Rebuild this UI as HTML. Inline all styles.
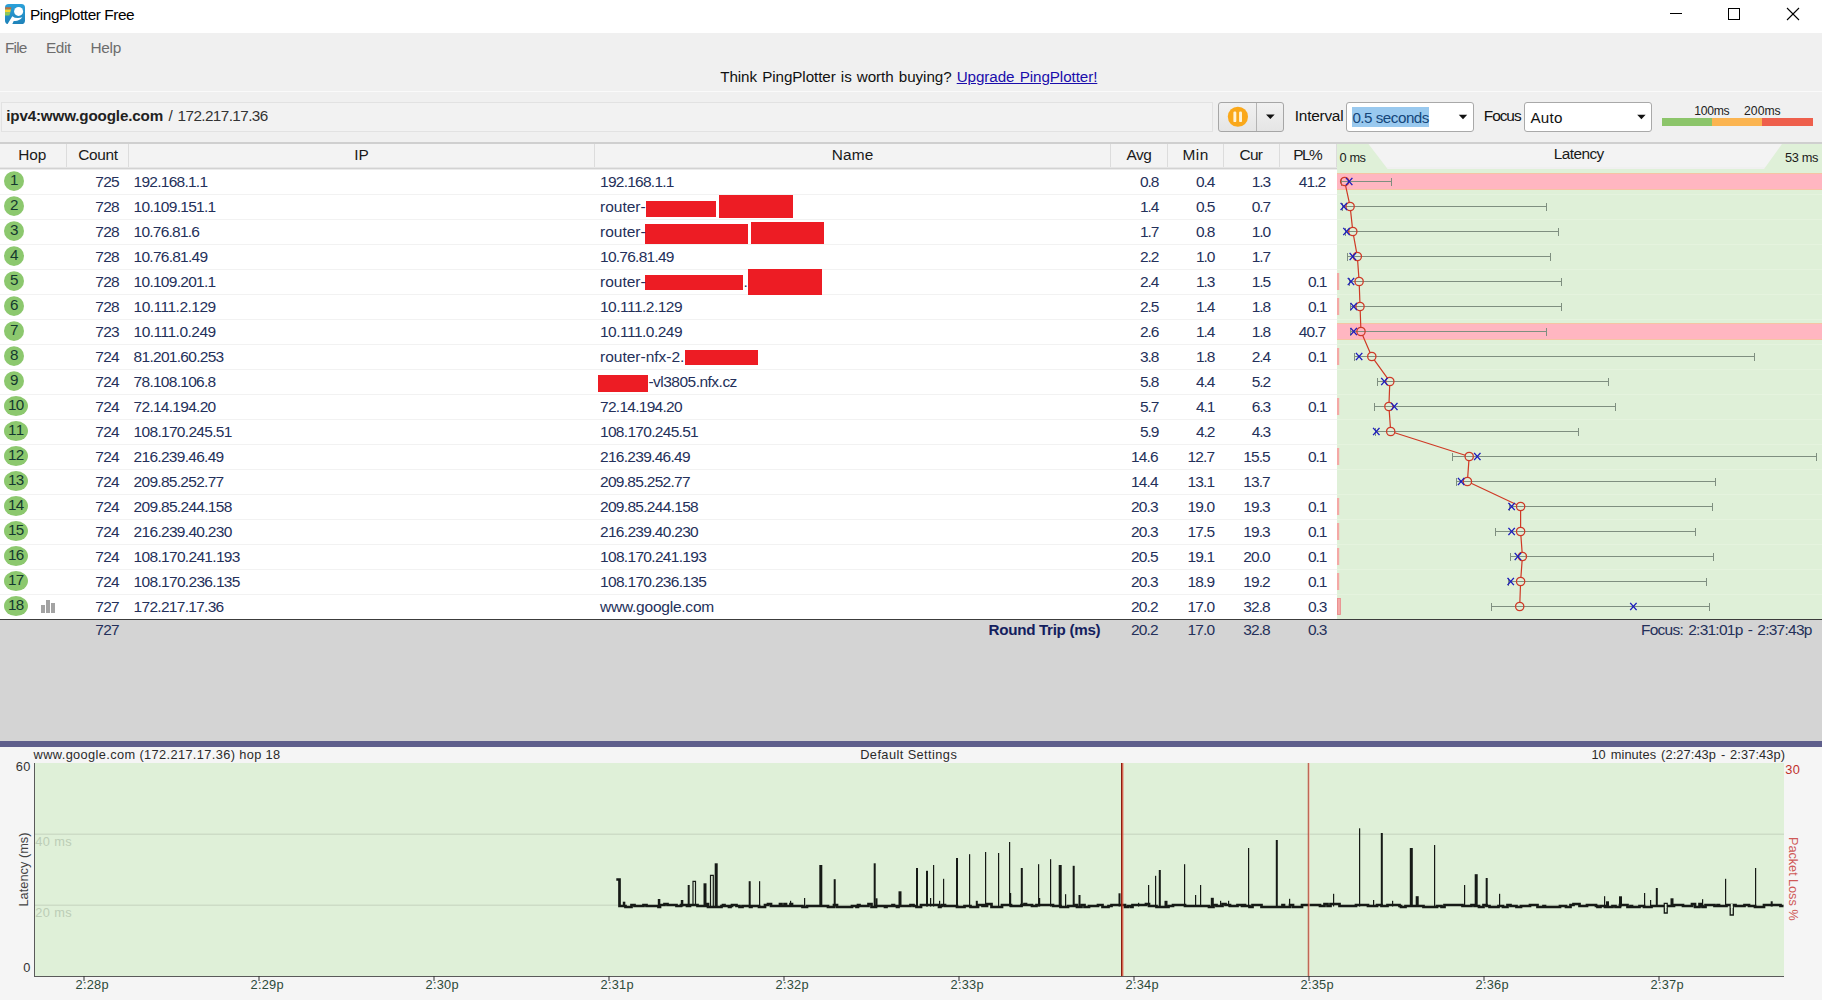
<!DOCTYPE html>
<html><head><meta charset="utf-8"><title>PingPlotter Free</title>
<style>
html,body{margin:0;padding:0}
body{width:1822px;height:1000px;position:relative;overflow:hidden;background:#f0f0f0;font-family:'Liberation Sans',sans-serif}
.t{position:absolute;white-space:pre}
.b{position:absolute}
svg{position:absolute;left:0;top:0}
</style></head><body>
<div class="b" style="left:0px;top:0px;width:1822px;height:33px;background:#fff;"></div>
<svg width="30" height="33" viewBox="0 0 30 33">
<defs><linearGradient id="ig" x1="0" y1="0" x2="0" y2="1"><stop offset="0" stop-color="#2ba1da"/><stop offset="1" stop-color="#1f82b9"/></linearGradient></defs>
<rect x="5" y="4" width="20" height="20" rx="3.600" fill="url(#ig)"/>
<path d="M5.300 7.300h6.100l-.5 2.200h-5.800z" fill="#c2703c"/>
<path d="M5 9.500h5.900l-.7 2.900h-5.200z" fill="#f6d730"/>
<path d="M5 12.400h5.200l-.8 3.200h-4.400z" fill="#8fca54"/>
<circle cx="18.600" cy="11.400" r="4.500" fill="#fff"/>
<path d="M7.300 24.400L12.300 16.200Q16 19.200 22.400 17.300Q18.600 21.800 13.700 21L12.100 24.400z" fill="#fff"/>
</svg>
<svg width="1822" height="33" viewBox="0 0 1822 33" shape-rendering="crispEdges">
<rect x="1670" y="13" width="12" height="1" fill="#000"/>
<rect x="1728.5" y="8.500" width="11" height="11" fill="none" stroke="#000" stroke-width="1"/>
<g shape-rendering="auto" stroke="#000" stroke-width="1.1"><line x1="1787" y1="8" x2="1799" y2="20"/><line x1="1799" y1="8" x2="1787" y2="20"/></g>
</svg>
<div class="b" style="left:0px;top:91px;width:1822px;height:1px;background:#fafafa;"></div>
<div class="b" style="left:1px;top:102px;width:1212px;height:30px;background:#f2f2f2;border:1px solid #e2e2e2;box-sizing:border-box;"></div>
<div class="b" style="left:1218px;top:102px;width:66px;height:30px;box-sizing:border-box;border:1px solid #a6a6a6;border-radius:3px;background:linear-gradient(#f1f1f1,#e5e5e5)"></div>
<div class="b" style="left:1256px;top:103px;width:1px;height:28px;background:#b4b4b4;"></div>
<svg width="1822" height="145" viewBox="0 0 1822 145">
<circle cx="1237.900" cy="116.750" r="10.100" fill="#faa81a"/>
<rect x="1233.400" y="111.600" width="2.900" height="10.500" rx="1.2" fill="#fff3d6"/>
<rect x="1239.100" y="111.600" width="2.900" height="10.500" rx="1.2" fill="#fff3d6"/>
<path d="M1266 114.500h8.700l-4.350 4.600z" fill="#111"/>
</svg>
<div class="b" style="left:1346px;top:102px;width:128px;height:30px;box-sizing:border-box;border:1px solid #a9a9a9;border-radius:3px;background:#fff"></div>
<div class="b" style="left:1352px;top:107px;width:77px;height:20px;background:#99c9ef;"></div>
<div class="b" style="left:1524px;top:102px;width:128px;height:30px;box-sizing:border-box;border:1px solid #a9a9a9;border-radius:3px;background:#fff"></div>
<svg width="1822" height="145" viewBox="0 0 1822 145"><path d="M1458.8 114.800h8.400l-4.200 4.400z" fill="#111"/><path d="M1637.2 114.800h8.400l-4.200 4.400z" fill="#111"/></svg>
<div class="b" style="left:1662px;top:118px;width:50px;height:8px;background:#8cc56a;"></div>
<div class="b" style="left:1712px;top:118px;width:50px;height:8px;background:#fbb450;"></div>
<div class="b" style="left:1762px;top:118px;width:50.5px;height:8px;background:#ee5f4c;"></div>
<div class="b" style="left:0px;top:142px;width:1822px;height:2px;background:#cfcfcf;"></div>
<div class="b" style="left:0px;top:144px;width:1822px;height:23px;background:#f3f3f3;"></div>
<div class="b" style="left:0px;top:167px;width:1337px;height:1px;background:#e5e5e5;"></div>
<div class="b" style="left:0px;top:168px;width:1337px;height:1px;background:#d2d2d2;"></div>
<div class="b" style="left:66px;top:144px;width:1px;height:23px;background:#dcdcdc;"></div>
<div class="b" style="left:128px;top:144px;width:1px;height:23px;background:#dcdcdc;"></div>
<div class="b" style="left:594px;top:144px;width:1px;height:23px;background:#dcdcdc;"></div>
<div class="b" style="left:1110px;top:144px;width:1px;height:23px;background:#dcdcdc;"></div>
<div class="b" style="left:1167px;top:144px;width:1px;height:23px;background:#dcdcdc;"></div>
<div class="b" style="left:1223px;top:144px;width:1px;height:23px;background:#dcdcdc;"></div>
<div class="b" style="left:1279px;top:144px;width:1px;height:23px;background:#dcdcdc;"></div>
<div class="b" style="left:1336px;top:144px;width:1px;height:23px;background:#dcdcdc;"></div>
<div class="b" style="left:0px;top:169px;width:1337px;height:450px;background:#fff;"></div>
<div class="b" style="left:0px;top:169px;width:1337px;height:1px;background:#ebebeb;"></div>
<div class="b" style="left:0px;top:194px;width:1337px;height:1px;background:#f2f2f2;"></div>
<div class="b" style="left:0px;top:219px;width:1337px;height:1px;background:#f2f2f2;"></div>
<div class="b" style="left:0px;top:244px;width:1337px;height:1px;background:#f2f2f2;"></div>
<div class="b" style="left:0px;top:269px;width:1337px;height:1px;background:#f2f2f2;"></div>
<div class="b" style="left:0px;top:294px;width:1337px;height:1px;background:#f2f2f2;"></div>
<div class="b" style="left:0px;top:319px;width:1337px;height:1px;background:#f2f2f2;"></div>
<div class="b" style="left:0px;top:344px;width:1337px;height:1px;background:#f2f2f2;"></div>
<div class="b" style="left:0px;top:369px;width:1337px;height:1px;background:#f2f2f2;"></div>
<div class="b" style="left:0px;top:394px;width:1337px;height:1px;background:#f2f2f2;"></div>
<div class="b" style="left:0px;top:419px;width:1337px;height:1px;background:#f2f2f2;"></div>
<div class="b" style="left:0px;top:444px;width:1337px;height:1px;background:#f2f2f2;"></div>
<div class="b" style="left:0px;top:469px;width:1337px;height:1px;background:#f2f2f2;"></div>
<div class="b" style="left:0px;top:494px;width:1337px;height:1px;background:#f2f2f2;"></div>
<div class="b" style="left:0px;top:519px;width:1337px;height:1px;background:#f2f2f2;"></div>
<div class="b" style="left:0px;top:544px;width:1337px;height:1px;background:#f2f2f2;"></div>
<div class="b" style="left:0px;top:569px;width:1337px;height:1px;background:#f2f2f2;"></div>
<div class="b" style="left:0px;top:594px;width:1337px;height:1px;background:#f2f2f2;"></div>
<svg width="40" height="640" viewBox="0 0 40 640" fill="#8cc86e"><ellipse cx="14" cy="181.1" rx="10" ry="9.9"/><ellipse cx="14" cy="206.1" rx="10" ry="9.9"/><ellipse cx="14" cy="231.1" rx="10" ry="9.9"/><ellipse cx="14" cy="256.1" rx="10" ry="9.9"/><ellipse cx="14" cy="281.1" rx="10" ry="9.9"/><ellipse cx="14" cy="306.1" rx="10" ry="9.9"/><ellipse cx="14" cy="331.1" rx="10" ry="9.9"/><ellipse cx="14" cy="356.1" rx="10" ry="9.9"/><ellipse cx="14" cy="381.1" rx="10" ry="9.9"/><ellipse cx="16" cy="406.1" rx="12" ry="10"/><ellipse cx="16" cy="431.1" rx="12" ry="10"/><ellipse cx="16" cy="456.1" rx="12" ry="10"/><ellipse cx="16" cy="481.1" rx="12" ry="10"/><ellipse cx="16" cy="506.1" rx="12" ry="10"/><ellipse cx="16" cy="531.1" rx="12" ry="10"/><ellipse cx="16" cy="556.1" rx="12" ry="10"/><ellipse cx="16" cy="581.1" rx="12" ry="10"/><ellipse cx="16" cy="606.1" rx="12" ry="10"/></svg>
<div class="b" style="left:645.8px;top:201.1px;width:70.0px;height:15.6px;background:#ed1c24;"></div>
<div class="b" style="left:719.1px;top:195.1px;width:73.7px;height:22.5px;background:#ed1c24;"></div>
<div class="b" style="left:645.0px;top:223.5px;width:102.8px;height:20.2px;background:#ed1c24;"></div>
<div class="b" style="left:751.2px;top:222.2px;width:72.8px;height:21.5px;background:#ed1c24;"></div>
<div class="b" style="left:645.0px;top:275.0px;width:98.0px;height:14.7px;background:#ed1c24;"></div>
<div class="b" style="left:748.0px;top:269.2px;width:74.0px;height:25.4px;background:#ed1c24;"></div>
<div class="b" style="left:685.0px;top:350.3px;width:73.0px;height:14.3px;background:#ed1c24;"></div>
<div class="b" style="left:598.0px;top:375.3px;width:50.0px;height:16.3px;background:#ed1c24;"></div>
<div class="b" style="left:41px;top:605.4px;width:3.6px;height:7.2px;background:#a3a3a3;"></div>
<div class="b" style="left:46.3px;top:600px;width:3.8px;height:12.6px;background:#a3a3a3;"></div>
<div class="b" style="left:51.4px;top:603px;width:3.6px;height:9.6px;background:#a3a3a3;"></div>
<div class="b" style="left:0px;top:619px;width:1822px;height:122px;background:#d4d4d4;"></div>
<div class="b" style="left:0px;top:619px;width:1822px;height:1px;background:#3c3c3c;"></div>
<svg width="1822" height="640" viewBox="0 0 1822 640"><rect x="1337" y="169" width="485" height="450" fill="#dff0d8"/><polygon points="1337,144 1368.500,144 1387.600,169 1337,169" fill="#dff0d8"/><polygon points="1782,144 1822,144 1822,169 1764,169" fill="#dff0d8"/><rect x="1337" y="194" width="485" height="1" fill="#e5f3de"/><rect x="1337" y="219" width="485" height="1" fill="#e5f3de"/><rect x="1337" y="244" width="485" height="1" fill="#e5f3de"/><rect x="1337" y="269" width="485" height="1" fill="#e5f3de"/><rect x="1337" y="294" width="485" height="1" fill="#e5f3de"/><rect x="1337" y="319" width="485" height="1" fill="#e5f3de"/><rect x="1337" y="344" width="485" height="1" fill="#e5f3de"/><rect x="1337" y="369" width="485" height="1" fill="#e5f3de"/><rect x="1337" y="394" width="485" height="1" fill="#e5f3de"/><rect x="1337" y="419" width="485" height="1" fill="#e5f3de"/><rect x="1337" y="444" width="485" height="1" fill="#e5f3de"/><rect x="1337" y="469" width="485" height="1" fill="#e5f3de"/><rect x="1337" y="494" width="485" height="1" fill="#e5f3de"/><rect x="1337" y="519" width="485" height="1" fill="#e5f3de"/><rect x="1337" y="544" width="485" height="1" fill="#e5f3de"/><rect x="1337" y="569" width="485" height="1" fill="#e5f3de"/><rect x="1337" y="594" width="485" height="1" fill="#e5f3de"/><rect x="1337" y="173.0" width="485" height="17" fill="#f6c3a4"/><rect x="1337" y="174.0" width="485" height="15" fill="#ffb6c1"/><rect x="1337" y="323.0" width="485" height="17" fill="#f6c3a4"/><rect x="1337" y="324.0" width="485" height="15" fill="#ffb6c1"/><rect x="1337" y="273.0" width="2.2" height="17" fill="#f4a9a6"/><rect x="1337" y="298.0" width="2.2" height="17" fill="#f4a9a6"/><rect x="1337" y="348.0" width="2.2" height="17" fill="#f4a9a6"/><rect x="1337" y="398.0" width="2.2" height="17" fill="#f4a9a6"/><rect x="1337" y="448.0" width="2.2" height="17" fill="#f4a9a6"/><rect x="1337" y="498.0" width="2.2" height="17" fill="#f4a9a6"/><rect x="1337" y="523.0" width="2.2" height="17" fill="#f4a9a6"/><rect x="1337" y="548.0" width="2.2" height="17" fill="#f4a9a6"/><rect x="1337" y="573.0" width="2.2" height="17" fill="#f4a9a6"/><rect x="1337" y="598.0" width="3.6" height="17" fill="#f4a9a6"/><rect x="1337.5" y="598.5" width="3" height="16" fill="none" stroke="#e98c8c" stroke-width="0.8"/><path d="M1341.5 177.5V185.5M1341.5 181.5H1391.5M1391.5 177.5V185.5" stroke="#7f8f80" stroke-width="1" fill="none" shape-rendering="crispEdges"/><path d="M1342.5 202.5V210.5M1342.5 206.5H1546.5M1546.5 202.5V210.5" stroke="#7f8f80" stroke-width="1" fill="none" shape-rendering="crispEdges"/><path d="M1345.5 227.5V235.5M1345.5 231.5H1558.5M1558.5 227.5V235.5" stroke="#7f8f80" stroke-width="1" fill="none" shape-rendering="crispEdges"/><path d="M1347.5 252.5V260.5M1347.5 256.5H1550.5M1550.5 252.5V260.5" stroke="#7f8f80" stroke-width="1" fill="none" shape-rendering="crispEdges"/><path d="M1349.5 277.5V285.5M1349.5 281.5H1561.5M1561.5 277.5V285.5" stroke="#7f8f80" stroke-width="1" fill="none" shape-rendering="crispEdges"/><path d="M1350.5 302.5V310.5M1350.5 306.5H1561.5M1561.5 302.5V310.5" stroke="#7f8f80" stroke-width="1" fill="none" shape-rendering="crispEdges"/><path d="M1350.5 327.5V335.5M1350.5 331.5H1546.5M1546.5 327.5V335.5" stroke="#7f8f80" stroke-width="1" fill="none" shape-rendering="crispEdges"/><path d="M1354.5 352.5V360.5M1354.5 356.5H1754.5M1754.5 352.5V360.5" stroke="#7f8f80" stroke-width="1" fill="none" shape-rendering="crispEdges"/><path d="M1377.5 377.5V385.5M1377.5 381.5H1608.5M1608.5 377.5V385.5" stroke="#7f8f80" stroke-width="1" fill="none" shape-rendering="crispEdges"/><path d="M1374.5 402.5V410.5M1374.5 406.5H1615.5M1615.5 402.5V410.5" stroke="#7f8f80" stroke-width="1" fill="none" shape-rendering="crispEdges"/><path d="M1375.5 427.5V435.5M1375.5 431.5H1578.5M1578.5 427.5V435.5" stroke="#7f8f80" stroke-width="1" fill="none" shape-rendering="crispEdges"/><path d="M1452.5 452.5V460.5M1452.5 456.5H1816.5M1816.5 452.5V460.5" stroke="#7f8f80" stroke-width="1" fill="none" shape-rendering="crispEdges"/><path d="M1456.5 477.5V485.5M1456.5 481.5H1715.5M1715.5 477.5V485.5" stroke="#7f8f80" stroke-width="1" fill="none" shape-rendering="crispEdges"/><path d="M1509.5 502.5V510.5M1509.5 506.5H1712.5M1712.5 502.5V510.5" stroke="#7f8f80" stroke-width="1" fill="none" shape-rendering="crispEdges"/><path d="M1495.5 527.5V535.5M1495.5 531.5H1695.5M1695.5 527.5V535.5" stroke="#7f8f80" stroke-width="1" fill="none" shape-rendering="crispEdges"/><path d="M1510.5 552.5V560.5M1510.5 556.5H1713.5M1713.5 552.5V560.5" stroke="#7f8f80" stroke-width="1" fill="none" shape-rendering="crispEdges"/><path d="M1508.5 577.5V585.5M1508.5 581.5H1706.5M1706.5 577.5V585.5" stroke="#7f8f80" stroke-width="1" fill="none" shape-rendering="crispEdges"/><path d="M1491.5 602.5V610.5M1491.5 606.5H1709.5M1709.5 602.5V610.5" stroke="#7f8f80" stroke-width="1" fill="none" shape-rendering="crispEdges"/><path d="M1345.59 185.56L1349.25 202.44M1350.57 210.63L1352.39 227.37M1353.57 235.58L1356.61 252.42M1357.64 260.64L1358.85 277.36M1359.30 285.65L1359.90 302.35M1360.20 310.65L1360.80 327.35M1362.60 335.31L1370.13 352.69M1374.20 359.87L1387.39 378.13M1389.67 385.65L1389.06 402.35M1389.21 410.64L1390.42 427.36M1394.67 432.76L1465.24 455.24M1468.89 460.64L1467.69 477.36M1471.14 483.26L1516.85 504.74M1520.61 510.65L1520.61 527.35M1520.90 535.64L1522.11 552.36M1522.11 560.64L1520.90 577.36M1520.46 585.65L1519.85 602.35" fill="none" stroke="#cf3a26" stroke-width="1.2"/><circle cx="1344.7" cy="181.5" r="4.15" fill="none" stroke="#cf3a28" stroke-width="1.3"/><circle cx="1350.1" cy="206.5" r="4.15" fill="none" stroke="#cf3a28" stroke-width="1.3"/><circle cx="1352.8" cy="231.5" r="4.15" fill="none" stroke="#cf3a28" stroke-width="1.3"/><circle cx="1357.3" cy="256.5" r="4.15" fill="none" stroke="#cf3a28" stroke-width="1.3"/><circle cx="1359.1" cy="281.5" r="4.15" fill="none" stroke="#cf3a28" stroke-width="1.3"/><circle cx="1360.0" cy="306.5" r="4.15" fill="none" stroke="#cf3a28" stroke-width="1.3"/><circle cx="1361.0" cy="331.5" r="4.15" fill="none" stroke="#cf3a28" stroke-width="1.3"/><circle cx="1371.8" cy="356.5" r="4.15" fill="none" stroke="#cf3a28" stroke-width="1.3"/><circle cx="1389.8" cy="381.5" r="4.15" fill="none" stroke="#cf3a28" stroke-width="1.3"/><circle cx="1388.9" cy="406.5" r="4.15" fill="none" stroke="#cf3a28" stroke-width="1.3"/><circle cx="1390.7" cy="431.5" r="4.15" fill="none" stroke="#cf3a28" stroke-width="1.3"/><circle cx="1469.2" cy="456.5" r="4.15" fill="none" stroke="#cf3a28" stroke-width="1.3"/><circle cx="1467.4" cy="481.5" r="4.15" fill="none" stroke="#cf3a28" stroke-width="1.3"/><circle cx="1520.6" cy="506.5" r="4.15" fill="none" stroke="#cf3a28" stroke-width="1.3"/><circle cx="1520.6" cy="531.5" r="4.15" fill="none" stroke="#cf3a28" stroke-width="1.3"/><circle cx="1522.4" cy="556.5" r="4.15" fill="none" stroke="#cf3a28" stroke-width="1.3"/><circle cx="1520.6" cy="581.5" r="4.15" fill="none" stroke="#cf3a28" stroke-width="1.3"/><circle cx="1519.7" cy="606.5" r="4.15" fill="none" stroke="#cf3a28" stroke-width="1.3"/><path d="M1346.0 177.9L1352.4 185.1M1352.4 177.9L1346.0 185.1" stroke="#1c1cbc" stroke-width="1.4" fill="none"/><path d="M1340.6 202.9L1347.0 210.1M1347.0 202.9L1340.6 210.1" stroke="#1c1cbc" stroke-width="1.4" fill="none"/><path d="M1343.3 227.9L1349.7 235.1M1349.7 227.9L1343.3 235.1" stroke="#1c1cbc" stroke-width="1.4" fill="none"/><path d="M1349.6 252.9L1356.0 260.1M1356.0 252.9L1349.6 260.1" stroke="#1c1cbc" stroke-width="1.4" fill="none"/><path d="M1347.8 277.9L1354.2 285.1M1354.2 277.9L1347.8 285.1" stroke="#1c1cbc" stroke-width="1.4" fill="none"/><path d="M1350.5 302.9L1356.9 310.1M1356.9 302.9L1350.5 310.1" stroke="#1c1cbc" stroke-width="1.4" fill="none"/><path d="M1350.5 327.9L1356.9 335.1M1356.9 327.9L1350.5 335.1" stroke="#1c1cbc" stroke-width="1.4" fill="none"/><path d="M1355.9 352.9L1362.3 360.1M1362.3 352.9L1355.9 360.1" stroke="#1c1cbc" stroke-width="1.4" fill="none"/><path d="M1381.2 377.9L1387.6 385.1M1387.6 377.9L1381.2 385.1" stroke="#1c1cbc" stroke-width="1.4" fill="none"/><path d="M1391.1 402.9L1397.5 410.1M1397.5 402.9L1391.1 410.1" stroke="#1c1cbc" stroke-width="1.4" fill="none"/><path d="M1373.1 427.9L1379.5 435.1M1379.5 427.9L1373.1 435.1" stroke="#1c1cbc" stroke-width="1.4" fill="none"/><path d="M1474.1 452.9L1480.5 460.1M1480.5 452.9L1474.1 460.1" stroke="#1c1cbc" stroke-width="1.4" fill="none"/><path d="M1457.9 477.9L1464.3 485.1M1464.3 477.9L1457.9 485.1" stroke="#1c1cbc" stroke-width="1.4" fill="none"/><path d="M1508.4 502.9L1514.8 510.1M1514.8 502.9L1508.4 510.1" stroke="#1c1cbc" stroke-width="1.4" fill="none"/><path d="M1508.4 527.9L1514.8 535.1M1514.8 527.9L1508.4 535.1" stroke="#1c1cbc" stroke-width="1.4" fill="none"/><path d="M1514.7 552.9L1521.1 560.1M1521.1 552.9L1514.7 560.1" stroke="#1c1cbc" stroke-width="1.4" fill="none"/><path d="M1507.5 577.9L1513.9 585.1M1513.9 577.9L1507.5 585.1" stroke="#1c1cbc" stroke-width="1.4" fill="none"/><path d="M1630.2 602.9L1636.6 610.1M1636.6 602.9L1630.2 610.1" stroke="#1c1cbc" stroke-width="1.4" fill="none"/></svg>
<div class="b" style="left:0px;top:741px;width:1822px;height:6px;background:#5f5f8c;"></div>
<div class="b" style="left:0px;top:747px;width:1822px;height:253px;background:#f5f5f5;"></div>
<svg width="1822" height="1000" viewBox="0 0 1822 1000"><rect x="35" y="763" width="1749" height="213" fill="#dff0d8"/><rect x="35" y="833.5" width="1749" height="1.5" fill="#cddcc6"/><rect x="35" y="904.5" width="1749" height="1.5" fill="#cddcc6"/><rect x="34" y="763" width="1" height="214" fill="#5a5a5a"/><rect x="34" y="976" width="1750" height="1" fill="#5a5a5a"/><rect x="83.5" y="976" width="1" height="5" fill="#333"/><rect x="258.5" y="976" width="1" height="5" fill="#333"/><rect x="433.5" y="976" width="1" height="5" fill="#333"/><rect x="608.5" y="976" width="1" height="5" fill="#333"/><rect x="783.5" y="976" width="1" height="5" fill="#333"/><rect x="958.5" y="976" width="1" height="5" fill="#333"/><rect x="1133.5" y="976" width="1" height="5" fill="#333"/><rect x="1308.5" y="976" width="1" height="5" fill="#333"/><rect x="1483.5" y="976" width="1" height="5" fill="#333"/><rect x="1658.5" y="976" width="1" height="5" fill="#333"/><path d="M616.3 879.5H619.5V906.0H625.5V907.0H631.5V905.0H634.5V906.0H643.5V905.0H646.5V906.0H649.5V906.0H658.5V907.0H660.0V905.0H664.5V904.0H667.5V905.0H676.5V906.0H678.0V906.0H681.0V905.0H687.0V906.0H690.0V905.0H693.0V905.0H694.5V905.0H697.5V906.0H706.5V904.0H708.0V907.0H712.5V907.0H721.5V906.0H723.0V905.0H724.5V906.0H727.5V906.0H729.0V907.0H730.5V906.0H732.0V905.0H736.5V906.0H739.5V907.0H742.5V906.0H745.5V906.0H750.0V907.0H751.5V906.0H753.0V906.0H759.0V907.0H762.0V907.0H765.0V905.0H768.0V904.0H771.0V906.0H775.5V906.0H780.0V904.0H781.5V906.0H784.5V904.0H786.0V906.0H790.5V904.0H792.0V906.0H795.0V906.0H798.0V906.0H802.5V907.0H807.0V906.0H808.5V906.0H811.5V906.0H816.0V906.0H822.0V906.0H828.0V907.0H831.0V907.0H834.0V905.0H837.0V907.0H840.0V907.0H843.0V907.0H852.0V906.0H856.5V907.0H858.0V905.0H859.5V906.0H868.5V904.0H871.5V907.0H876.0V906.0H882.0V906.0H885.0V907.0H886.5V906.0H892.5V905.0H894.0V906.0H897.0V907.0H898.5V906.0H904.5V906.0H906.0V906.0H910.5V905.0H913.5V906.0H916.5V907.0H921.0V905.0H930.0V905.0H933.0V905.0H934.5V905.0H939.0V907.0H940.5V906.0H942.0V905.0H945.0V906.0H946.5V906.0H955.5V906.0H957.0V907.0H960.0V907.0H964.5V906.0H970.5V907.0H975.0V907.0H976.5V907.0H978.0V905.0H982.5V906.0H984.0V905.0H985.5V906.0H987.0V904.0H991.5V907.0H996.0V907.0H1002.0V905.0H1011.0V906.0H1020.0V906.0H1021.5V905.0H1024.5V904.0H1026.0V905.0H1032.0V906.0H1033.5V906.0H1036.5V905.0H1039.5V905.0H1044.0V905.0H1050.0V905.0H1053.0V906.0H1056.0V906.0H1060.5V907.0H1063.5V907.0H1068.0V906.0H1072.5V906.0H1075.5V905.0H1077.0V907.0H1080.0V907.0H1081.5V905.0H1084.5V907.0H1089.0V906.0H1098.0V905.0H1102.5V907.0H1108.5V906.0H1110.0V906.0H1111.5V905.0H1114.5V905.0H1117.5V905.0H1119.0V905.0H1123.5V905.0H1125.0V907.0H1128.0V906.0H1131.0V907.0H1132.5V905.0H1141.5V905.0H1146.0V904.0H1149.0V906.0H1155.0V906.0H1156.5V907.0H1165.5V907.0H1168.5V906.0H1173.0V905.0H1182.0V905.0H1185.0V906.0H1188.0V906.0H1192.5V906.0H1198.5V906.0H1200.0V906.0H1209.0V907.0H1213.5V905.0H1216.5V906.0H1218.0V906.0H1222.5V904.0H1225.5V905.0H1230.0V906.0H1231.5V906.0H1233.0V906.0H1237.5V905.0H1240.5V905.0H1242.0V906.0H1243.5V905.0H1245.0V906.0H1249.5V907.0H1252.5V905.0H1261.5V907.0H1270.5V907.0H1276.5V907.0H1282.5V905.0H1284.0V907.0H1290.0V905.0H1293.0V907.0H1302.0V905.0H1311.0V905.0H1320.0V906.0H1324.5V904.0H1327.5V906.0H1330.5V904.0H1339.5V906.0H1345.5V906.0H1354.5V906.0H1356.0V905.0H1357.5V905.0H1359.0V905.0H1363.5V905.0H1365.0V905.0H1368.0V906.0H1377.0V905.0H1381.5V906.0H1387.5V905.0H1392.0V905.0H1398.0V905.0H1399.5V906.0H1401.0V907.0H1404.0V907.0H1405.5V906.0H1408.5V906.0H1411.5V906.0H1416.0V906.0H1422.0V906.0H1423.5V907.0H1426.5V907.0H1435.5V907.0H1437.0V906.0H1441.5V907.0H1444.5V905.0H1453.5V905.0H1462.5V906.0H1471.5V905.0H1474.5V906.0H1479.0V907.0H1483.5V905.0H1486.5V906.0H1489.5V907.0H1492.5V907.0H1495.5V907.0H1498.5V906.0H1503.0V907.0H1507.5V905.0H1510.5V906.0H1512.0V906.0H1516.5V907.0H1521.0V906.0H1530.0V905.0H1534.5V905.0H1537.5V907.0H1543.5V906.0H1545.0V907.0H1554.0V907.0H1560.0V906.0H1563.0V906.0H1566.0V907.0H1569.0V907.0H1570.5V905.0H1573.5V904.0H1579.5V906.0H1581.0V906.0H1587.0V905.0H1591.5V905.0H1596.0V906.0H1597.5V907.0H1600.5V906.0H1605.0V907.0H1609.5V907.0H1612.5V906.0H1614.0V906.0H1615.5V907.0H1620.0V905.0H1623.0V905.0H1627.5V907.0H1630.5V906.0H1632.0V907.0H1635.0V907.0H1639.5V906.0H1644.0V907.0H1648.5V907.0H1651.5V906.0H1654.5V906.0H1659.0V906.0H1660.5V906.0H1665.0V904.0H1666.5V906.0H1669.5V906.0H1674.0V905.0H1683.0V906.0H1692.0V904.0H1695.0V907.0H1699.5V904.0H1701.0V906.0H1702.5V907.0H1705.5V905.0H1714.5V906.0H1717.5V905.0H1719.0V906.0H1722.0V906.0H1726.5V905.0H1735.5V906.0H1744.5V905.0H1746.0V905.0H1747.5V905.0H1749.0V906.0H1752.0V906.0H1755.0V907.0H1764.0V905.0H1765.5V905.0H1771.5V905.0H1780.5V906.0H1783.5V906.0" fill="none" stroke="#161a16" stroke-width="2.7" stroke-linejoin="miter"/><rect x="622.8" y="901.7" width="2.5" height="4.8" fill="#161a16"/><rect x="657.8" y="899.0" width="2.5" height="7.5" fill="#161a16"/><rect x="680.8" y="900.0" width="2.5" height="6.5" fill="#161a16"/><rect x="687.7" y="885.0" width="2" height="21.5" fill="#161a16"/><rect x="703.5" y="883.3" width="3" height="23.2" fill="#161a16"/><rect x="714.7" y="863.3" width="3" height="43.2" fill="#161a16"/><rect x="748.7" y="881.2" width="2" height="25.3" fill="#161a16"/><rect x="759" y="881.2" width="1.2" height="25.3" fill="#161a16"/><rect x="790" y="900.8" width="1.2" height="5.7" fill="#161a16"/><rect x="804" y="898.0" width="1.2" height="8.5" fill="#161a16"/><rect x="819.3" y="865.0" width="3" height="41.5" fill="#161a16"/><rect x="833.7" y="879.2" width="2" height="27.3" fill="#161a16"/><rect x="873.7" y="863.3" width="2" height="43.2" fill="#161a16"/><rect x="875.5" y="898.3" width="2" height="8.2" fill="#161a16"/><rect x="898.5" y="891.3" width="3" height="15.2" fill="#161a16"/><rect x="916.0" y="868.0" width="2" height="38.5" fill="#161a16"/><rect x="926.0" y="870.8" width="2" height="35.7" fill="#161a16"/><rect x="930" y="898.0" width="1.2" height="8.5" fill="#161a16"/><rect x="933" y="865.0" width="1.2" height="41.5" fill="#161a16"/><rect x="939" y="900.8" width="1.2" height="5.7" fill="#161a16"/><rect x="943" y="878.8" width="1.2" height="27.7" fill="#161a16"/><rect x="956.0" y="858.0" width="2" height="48.5" fill="#161a16"/><rect x="969" y="854.2" width="1.2" height="52.3" fill="#161a16"/><rect x="975.8" y="900.8" width="2" height="5.7" fill="#161a16"/><rect x="985" y="852.0" width="1.2" height="54.5" fill="#161a16"/><rect x="998" y="853.0" width="1.2" height="53.5" fill="#161a16"/><rect x="1009" y="842.0" width="1.2" height="64.5" fill="#161a16"/><rect x="1010" y="893.0" width="1.2" height="13.5" fill="#161a16"/><rect x="1020.8" y="868.0" width="2" height="38.5" fill="#161a16"/><rect x="1038" y="864.2" width="1.2" height="42.3" fill="#161a16"/><rect x="1039" y="898.0" width="1.2" height="8.5" fill="#161a16"/><rect x="1050" y="859.2" width="1.2" height="47.3" fill="#161a16"/><rect x="1058.7" y="865.0" width="3" height="41.5" fill="#161a16"/><rect x="1065" y="894.2" width="1.2" height="12.3" fill="#161a16"/><rect x="1072.7" y="865.8" width="2" height="40.7" fill="#161a16"/><rect x="1078.5" y="895.0" width="2" height="11.5" fill="#161a16"/><rect x="1118.5" y="893.3" width="2" height="13.2" fill="#161a16"/><rect x="1138" y="902.8" width="1.2" height="3.7" fill="#161a16"/><rect x="1148" y="885.0" width="1.2" height="21.5" fill="#161a16"/><rect x="1155" y="875.8" width="1.2" height="30.7" fill="#161a16"/><rect x="1158.8" y="870.0" width="2" height="36.5" fill="#161a16"/><rect x="1164.5" y="900.8" width="3" height="5.7" fill="#161a16"/><rect x="1184" y="864.2" width="1.2" height="42.3" fill="#161a16"/><rect x="1195" y="895.0" width="1.2" height="11.5" fill="#161a16"/><rect x="1200" y="885.0" width="1.2" height="21.5" fill="#161a16"/><rect x="1210.8" y="897.8" width="3" height="8.7" fill="#161a16"/><rect x="1220" y="900.8" width="1.2" height="5.7" fill="#161a16"/><rect x="1228" y="900.8" width="1.2" height="5.7" fill="#161a16"/><rect x="1248" y="848.0" width="1.2" height="58.5" fill="#161a16"/><rect x="1275.8" y="840.0" width="2" height="66.5" fill="#161a16"/><rect x="1289" y="898.8" width="1.2" height="7.7" fill="#161a16"/><rect x="1333" y="893.8" width="1.2" height="12.7" fill="#161a16"/><rect x="1359" y="828.3" width="1.2" height="78.2" fill="#161a16"/><rect x="1373" y="900.0" width="1.2" height="6.5" fill="#161a16"/><rect x="1380.8" y="833.0" width="2" height="73.5" fill="#161a16"/><rect x="1392" y="900.8" width="1.2" height="5.7" fill="#161a16"/><rect x="1409.8" y="848.0" width="3" height="58.5" fill="#161a16"/><rect x="1415.7" y="896.2" width="3" height="10.3" fill="#161a16"/><rect x="1434" y="845.0" width="1.2" height="61.5" fill="#161a16"/><rect x="1464" y="885.0" width="1.2" height="21.5" fill="#161a16"/><rect x="1474.7" y="874.2" width="3" height="32.3" fill="#161a16"/><rect x="1485.7" y="878.0" width="2" height="28.5" fill="#161a16"/><rect x="1499" y="893.8" width="1.2" height="12.7" fill="#161a16"/><rect x="1604" y="896.2" width="1.2" height="10.3" fill="#161a16"/><rect x="1606.0" y="901.3" width="3" height="5.2" fill="#161a16"/><rect x="1619.0" y="896.3" width="3" height="10.2" fill="#161a16"/><rect x="1644" y="893.0" width="1.2" height="13.5" fill="#161a16"/><rect x="1650" y="900.0" width="1.2" height="6.5" fill="#161a16"/><rect x="1655.8" y="888.0" width="2" height="18.5" fill="#161a16"/><rect x="1670.5" y="898.3" width="3" height="8.2" fill="#161a16"/><rect x="1702" y="899.2" width="1.2" height="7.3" fill="#161a16"/><rect x="1725" y="878.8" width="1.2" height="27.7" fill="#161a16"/><rect x="1755" y="868.0" width="1.2" height="38.5" fill="#161a16"/><rect x="1770.7" y="901.3" width="2" height="5.2" fill="#161a16"/><path d="M693 906.0V881.3H695.5V906.0" fill="none" stroke="#161a16" stroke-width="1.2"/><path d="M710.5 906.0V875.3H713.3V906.0" fill="none" stroke="#161a16" stroke-width="1.2"/><path d="M1664.3 906.0V913H1667.2V906.0" fill="none" stroke="#161a16" stroke-width="1.3"/><rect x="1664.8999999999999" y="904.0" width="1.7" height="4" fill="#dff0d8"/><path d="M1730.2 906.0V915H1733.3V906.0" fill="none" stroke="#161a16" stroke-width="1.3"/><rect x="1730.8" y="904.0" width="1.9" height="4" fill="#dff0d8"/><rect x="1121" y="763" width="1.4" height="213" fill="#8e1c10"/><rect x="1122.4" y="763" width="0.9" height="213" fill="#e0402c"/><rect x="1307.800" y="763" width="1" height="213" fill="#a83020"/><rect x="1308.800" y="763" width="0.8" height="213" fill="#f5b0a0"/></svg>
<span class="t" style="left:30.00px;top:5px;font-size:15.4px;line-height:19px;color:#000;letter-spacing:-0.441px;">PingPlotter Free</span>
<span class="t" style="left:5.00px;top:38px;font-size:15.4px;line-height:19px;color:#6d6d6d;letter-spacing:-0.804px;">File</span>
<span class="t" style="left:45.90px;top:38px;font-size:15.4px;line-height:19px;color:#6d6d6d;letter-spacing:-0.377px;">Edit</span>
<span class="t" style="left:90.60px;top:38px;font-size:15.4px;line-height:19px;color:#6d6d6d;letter-spacing:-0.352px;">Help</span>
<span class="t" style="left:720.20px;top:67px;font-size:15.2px;line-height:19px;color:#111;letter-spacing:-0.067px;word-spacing:1.0px;">Think PingPlotter is worth buying? <span style="color:#1a0dab;text-decoration:underline">Upgrade PingPlotter!</span></span>
<span class="t" style="left:6.20px;top:106px;font-size:15.2px;line-height:19px;color:#222;font-weight:bold;letter-spacing:-0.154px;">ipv4:www.google.com</span>
<span class="t" style="left:168.40px;top:106px;font-size:15.3px;line-height:19px;color:#333;">/</span>
<span class="t" style="left:177.60px;top:106px;font-size:15.3px;line-height:19px;color:#333;letter-spacing:-0.602px;">172.217.17.36</span>
<span class="t" style="left:1294.80px;top:106px;font-size:15.4px;line-height:19px;color:#111;letter-spacing:-0.241px;">Interval</span>
<span class="t" style="left:1352.40px;top:108px;font-size:15.2px;line-height:19px;color:#14467a;letter-spacing:-0.491px;">0.5 seconds</span>
<span class="t" style="left:1483.80px;top:106px;font-size:15.4px;line-height:19px;color:#111;letter-spacing:-1.030px;">Focus</span>
<span class="t" style="left:1530.40px;top:108px;font-size:15.2px;line-height:19px;color:#111;letter-spacing:0.250px;">Auto</span>
<span class="t" style="left:1694.30px;top:103px;font-size:12.2px;line-height:16px;color:#222;letter-spacing:-0.298px;">100ms</span>
<span class="t" style="left:1744.10px;top:103px;font-size:12.2px;line-height:16px;color:#222;">200ms</span>
<span class="t" style="left:18.20px;top:145px;font-size:15.4px;line-height:19px;color:#1a1a1a;letter-spacing:-0.017px;">Hop</span>
<span class="t" style="left:78.20px;top:145px;font-size:15.4px;line-height:19px;color:#1a1a1a;letter-spacing:-0.320px;">Count</span>
<span class="t" style="left:354.23px;top:145px;font-size:15.4px;line-height:19px;color:#1a1a1a;">IP</span>
<span class="t" style="left:831.80px;top:145px;font-size:15.4px;line-height:19px;color:#1a1a1a;letter-spacing:0.112px;">Name</span>
<span class="t" style="left:1126.50px;top:145px;font-size:15.4px;line-height:19px;color:#1a1a1a;letter-spacing:-0.425px;">Avg</span>
<span class="t" style="left:1182.40px;top:145px;font-size:15.4px;line-height:19px;color:#1a1a1a;letter-spacing:0.594px;">Min</span>
<span class="t" style="left:1239.40px;top:145px;font-size:15.4px;line-height:19px;color:#1a1a1a;letter-spacing:-0.606px;">Cur</span>
<span class="t" style="left:1293.30px;top:145px;font-size:15.4px;line-height:19px;color:#1a1a1a;letter-spacing:-1.558px;">PL%</span>
<span class="t" style="left:1553.75px;top:144px;font-size:15.4px;line-height:19px;color:#1a1a1a;letter-spacing:-0.568px;">Latency</span>
<span class="t" style="left:9.97px;top:170px;font-size:15.2px;line-height:19px;color:#14382f;">1</span>
<span class="t" style="left:95.33px;top:172px;font-size:15.5px;line-height:19px;color:#24305a;letter-spacing:-0.803px;">725</span>
<span class="t" style="left:133.60px;top:172px;font-size:15.5px;line-height:19px;color:#24305a;letter-spacing:-0.742px;">192.168.1.1</span>
<span class="t" style="left:600.00px;top:172px;font-size:15.5px;line-height:19px;color:#24305a;letter-spacing:-0.742px;">192.168.1.1</span>
<span class="t" style="left:1140.07px;top:172px;font-size:15.5px;line-height:19px;color:#24305a;letter-spacing:-1.066px;">0.8</span>
<span class="t" style="left:1195.97px;top:172px;font-size:15.5px;line-height:19px;color:#24305a;letter-spacing:-1.066px;">0.4</span>
<span class="t" style="left:1251.77px;top:172px;font-size:15.5px;line-height:19px;color:#24305a;letter-spacing:-1.066px;">1.3</span>
<span class="t" style="left:1298.68px;top:172px;font-size:15.5px;line-height:19px;color:#24305a;letter-spacing:-0.884px;">41.2</span>
<span class="t" style="left:9.97px;top:195px;font-size:15.2px;line-height:19px;color:#14382f;">2</span>
<span class="t" style="left:95.33px;top:197px;font-size:15.5px;line-height:19px;color:#24305a;letter-spacing:-0.803px;">728</span>
<span class="t" style="left:133.60px;top:197px;font-size:15.5px;line-height:19px;color:#24305a;letter-spacing:-0.723px;">10.109.151.1</span>
<span class="t" style="left:1140.07px;top:197px;font-size:15.5px;line-height:19px;color:#24305a;letter-spacing:-1.066px;">1.4</span>
<span class="t" style="left:1195.97px;top:197px;font-size:15.5px;line-height:19px;color:#24305a;letter-spacing:-1.066px;">0.5</span>
<span class="t" style="left:1251.77px;top:197px;font-size:15.5px;line-height:19px;color:#24305a;letter-spacing:-1.066px;">0.7</span>
<span class="t" style="left:9.97px;top:220px;font-size:15.2px;line-height:19px;color:#14382f;">3</span>
<span class="t" style="left:95.33px;top:222px;font-size:15.5px;line-height:19px;color:#24305a;letter-spacing:-0.803px;">728</span>
<span class="t" style="left:133.60px;top:222px;font-size:15.5px;line-height:19px;color:#24305a;letter-spacing:-0.765px;">10.76.81.6</span>
<span class="t" style="left:1140.07px;top:222px;font-size:15.5px;line-height:19px;color:#24305a;letter-spacing:-1.066px;">1.7</span>
<span class="t" style="left:1195.97px;top:222px;font-size:15.5px;line-height:19px;color:#24305a;letter-spacing:-1.066px;">0.8</span>
<span class="t" style="left:1251.77px;top:222px;font-size:15.5px;line-height:19px;color:#24305a;letter-spacing:-1.066px;">1.0</span>
<span class="t" style="left:9.97px;top:245px;font-size:15.2px;line-height:19px;color:#14382f;">4</span>
<span class="t" style="left:95.33px;top:247px;font-size:15.5px;line-height:19px;color:#24305a;letter-spacing:-0.803px;">728</span>
<span class="t" style="left:133.60px;top:247px;font-size:15.5px;line-height:19px;color:#24305a;letter-spacing:-0.742px;">10.76.81.49</span>
<span class="t" style="left:600.00px;top:247px;font-size:15.5px;line-height:19px;color:#24305a;letter-spacing:-0.742px;">10.76.81.49</span>
<span class="t" style="left:1140.07px;top:247px;font-size:15.5px;line-height:19px;color:#24305a;letter-spacing:-1.066px;">2.2</span>
<span class="t" style="left:1195.97px;top:247px;font-size:15.5px;line-height:19px;color:#24305a;letter-spacing:-1.066px;">1.0</span>
<span class="t" style="left:1251.77px;top:247px;font-size:15.5px;line-height:19px;color:#24305a;letter-spacing:-1.066px;">1.7</span>
<span class="t" style="left:9.97px;top:270px;font-size:15.2px;line-height:19px;color:#14382f;">5</span>
<span class="t" style="left:95.33px;top:272px;font-size:15.5px;line-height:19px;color:#24305a;letter-spacing:-0.803px;">728</span>
<span class="t" style="left:133.60px;top:272px;font-size:15.5px;line-height:19px;color:#24305a;letter-spacing:-0.723px;">10.109.201.1</span>
<span class="t" style="left:1140.07px;top:272px;font-size:15.5px;line-height:19px;color:#24305a;letter-spacing:-1.066px;">2.4</span>
<span class="t" style="left:1195.97px;top:272px;font-size:15.5px;line-height:19px;color:#24305a;letter-spacing:-1.066px;">1.3</span>
<span class="t" style="left:1251.77px;top:272px;font-size:15.5px;line-height:19px;color:#24305a;letter-spacing:-1.066px;">1.5</span>
<span class="t" style="left:1308.07px;top:272px;font-size:15.5px;line-height:19px;color:#24305a;letter-spacing:-1.066px;">0.1</span>
<span class="t" style="left:9.97px;top:295px;font-size:15.2px;line-height:19px;color:#14382f;">6</span>
<span class="t" style="left:95.33px;top:297px;font-size:15.5px;line-height:19px;color:#24305a;letter-spacing:-0.803px;">728</span>
<span class="t" style="left:133.60px;top:297px;font-size:15.5px;line-height:19px;color:#24305a;letter-spacing:-0.513px;">10.111.2.129</span>
<span class="t" style="left:600.00px;top:297px;font-size:15.5px;line-height:19px;color:#24305a;letter-spacing:-0.513px;">10.111.2.129</span>
<span class="t" style="left:1140.07px;top:297px;font-size:15.5px;line-height:19px;color:#24305a;letter-spacing:-1.066px;">2.5</span>
<span class="t" style="left:1195.97px;top:297px;font-size:15.5px;line-height:19px;color:#24305a;letter-spacing:-1.066px;">1.4</span>
<span class="t" style="left:1251.77px;top:297px;font-size:15.5px;line-height:19px;color:#24305a;letter-spacing:-1.066px;">1.8</span>
<span class="t" style="left:1308.07px;top:297px;font-size:15.5px;line-height:19px;color:#24305a;letter-spacing:-1.066px;">0.1</span>
<span class="t" style="left:9.97px;top:320px;font-size:15.2px;line-height:19px;color:#14382f;">7</span>
<span class="t" style="left:95.33px;top:322px;font-size:15.5px;line-height:19px;color:#24305a;letter-spacing:-0.803px;">723</span>
<span class="t" style="left:133.60px;top:322px;font-size:15.5px;line-height:19px;color:#24305a;letter-spacing:-0.513px;">10.111.0.249</span>
<span class="t" style="left:600.00px;top:322px;font-size:15.5px;line-height:19px;color:#24305a;letter-spacing:-0.513px;">10.111.0.249</span>
<span class="t" style="left:1140.07px;top:322px;font-size:15.5px;line-height:19px;color:#24305a;letter-spacing:-1.066px;">2.6</span>
<span class="t" style="left:1195.97px;top:322px;font-size:15.5px;line-height:19px;color:#24305a;letter-spacing:-1.066px;">1.4</span>
<span class="t" style="left:1251.77px;top:322px;font-size:15.5px;line-height:19px;color:#24305a;letter-spacing:-1.066px;">1.8</span>
<span class="t" style="left:1298.68px;top:322px;font-size:15.5px;line-height:19px;color:#24305a;letter-spacing:-0.884px;">40.7</span>
<span class="t" style="left:9.97px;top:345px;font-size:15.2px;line-height:19px;color:#14382f;">8</span>
<span class="t" style="left:95.33px;top:347px;font-size:15.5px;line-height:19px;color:#24305a;letter-spacing:-0.803px;">724</span>
<span class="t" style="left:133.60px;top:347px;font-size:15.5px;line-height:19px;color:#24305a;letter-spacing:-0.706px;">81.201.60.253</span>
<span class="t" style="left:1140.07px;top:347px;font-size:15.5px;line-height:19px;color:#24305a;letter-spacing:-1.066px;">3.8</span>
<span class="t" style="left:1195.97px;top:347px;font-size:15.5px;line-height:19px;color:#24305a;letter-spacing:-1.066px;">1.8</span>
<span class="t" style="left:1251.77px;top:347px;font-size:15.5px;line-height:19px;color:#24305a;letter-spacing:-1.066px;">2.4</span>
<span class="t" style="left:1308.07px;top:347px;font-size:15.5px;line-height:19px;color:#24305a;letter-spacing:-1.066px;">0.1</span>
<span class="t" style="left:9.97px;top:370px;font-size:15.2px;line-height:19px;color:#14382f;">9</span>
<span class="t" style="left:95.33px;top:372px;font-size:15.5px;line-height:19px;color:#24305a;letter-spacing:-0.803px;">724</span>
<span class="t" style="left:133.60px;top:372px;font-size:15.5px;line-height:19px;color:#24305a;letter-spacing:-0.723px;">78.108.106.8</span>
<span class="t" style="left:1140.07px;top:372px;font-size:15.5px;line-height:19px;color:#24305a;letter-spacing:-1.066px;">5.8</span>
<span class="t" style="left:1195.97px;top:372px;font-size:15.5px;line-height:19px;color:#24305a;letter-spacing:-1.066px;">4.4</span>
<span class="t" style="left:1251.77px;top:372px;font-size:15.5px;line-height:19px;color:#24305a;letter-spacing:-1.066px;">5.2</span>
<span class="t" style="left:8.11px;top:395px;font-size:15.2px;line-height:19px;color:#14382f;letter-spacing:-0.726px;">10</span>
<span class="t" style="left:95.33px;top:397px;font-size:15.5px;line-height:19px;color:#24305a;letter-spacing:-0.803px;">724</span>
<span class="t" style="left:133.60px;top:397px;font-size:15.5px;line-height:19px;color:#24305a;letter-spacing:-0.723px;">72.14.194.20</span>
<span class="t" style="left:600.00px;top:397px;font-size:15.5px;line-height:19px;color:#24305a;letter-spacing:-0.723px;">72.14.194.20</span>
<span class="t" style="left:1140.07px;top:397px;font-size:15.5px;line-height:19px;color:#24305a;letter-spacing:-1.066px;">5.7</span>
<span class="t" style="left:1195.97px;top:397px;font-size:15.5px;line-height:19px;color:#24305a;letter-spacing:-1.066px;">4.1</span>
<span class="t" style="left:1251.77px;top:397px;font-size:15.5px;line-height:19px;color:#24305a;letter-spacing:-1.066px;">6.3</span>
<span class="t" style="left:1308.07px;top:397px;font-size:15.5px;line-height:19px;color:#24305a;letter-spacing:-1.066px;">0.1</span>
<span class="t" style="left:8.11px;top:420px;font-size:15.2px;line-height:19px;color:#14382f;letter-spacing:0.414px;">11</span>
<span class="t" style="left:95.33px;top:422px;font-size:15.5px;line-height:19px;color:#24305a;letter-spacing:-0.803px;">724</span>
<span class="t" style="left:133.60px;top:422px;font-size:15.5px;line-height:19px;color:#24305a;letter-spacing:-0.693px;">108.170.245.51</span>
<span class="t" style="left:600.00px;top:422px;font-size:15.5px;line-height:19px;color:#24305a;letter-spacing:-0.693px;">108.170.245.51</span>
<span class="t" style="left:1140.07px;top:422px;font-size:15.5px;line-height:19px;color:#24305a;letter-spacing:-1.066px;">5.9</span>
<span class="t" style="left:1195.97px;top:422px;font-size:15.5px;line-height:19px;color:#24305a;letter-spacing:-1.066px;">4.2</span>
<span class="t" style="left:1251.77px;top:422px;font-size:15.5px;line-height:19px;color:#24305a;letter-spacing:-1.066px;">4.3</span>
<span class="t" style="left:8.11px;top:445px;font-size:15.2px;line-height:19px;color:#14382f;letter-spacing:-0.726px;">12</span>
<span class="t" style="left:95.33px;top:447px;font-size:15.5px;line-height:19px;color:#24305a;letter-spacing:-0.803px;">724</span>
<span class="t" style="left:133.60px;top:447px;font-size:15.5px;line-height:19px;color:#24305a;letter-spacing:-0.706px;">216.239.46.49</span>
<span class="t" style="left:600.00px;top:447px;font-size:15.5px;line-height:19px;color:#24305a;letter-spacing:-0.706px;">216.239.46.49</span>
<span class="t" style="left:1131.08px;top:447px;font-size:15.5px;line-height:19px;color:#24305a;letter-spacing:-0.884px;">14.6</span>
<span class="t" style="left:1187.58px;top:447px;font-size:15.5px;line-height:19px;color:#24305a;letter-spacing:-0.884px;">12.7</span>
<span class="t" style="left:1243.18px;top:447px;font-size:15.5px;line-height:19px;color:#24305a;letter-spacing:-0.884px;">15.5</span>
<span class="t" style="left:1308.07px;top:447px;font-size:15.5px;line-height:19px;color:#24305a;letter-spacing:-1.066px;">0.1</span>
<span class="t" style="left:8.11px;top:470px;font-size:15.2px;line-height:19px;color:#14382f;letter-spacing:-0.726px;">13</span>
<span class="t" style="left:95.33px;top:472px;font-size:15.5px;line-height:19px;color:#24305a;letter-spacing:-0.803px;">724</span>
<span class="t" style="left:133.60px;top:472px;font-size:15.5px;line-height:19px;color:#24305a;letter-spacing:-0.706px;">209.85.252.77</span>
<span class="t" style="left:600.00px;top:472px;font-size:15.5px;line-height:19px;color:#24305a;letter-spacing:-0.706px;">209.85.252.77</span>
<span class="t" style="left:1131.08px;top:472px;font-size:15.5px;line-height:19px;color:#24305a;letter-spacing:-0.884px;">14.4</span>
<span class="t" style="left:1187.58px;top:472px;font-size:15.5px;line-height:19px;color:#24305a;letter-spacing:-0.884px;">13.1</span>
<span class="t" style="left:1243.18px;top:472px;font-size:15.5px;line-height:19px;color:#24305a;letter-spacing:-0.884px;">13.7</span>
<span class="t" style="left:8.11px;top:495px;font-size:15.2px;line-height:19px;color:#14382f;letter-spacing:-0.726px;">14</span>
<span class="t" style="left:95.33px;top:497px;font-size:15.5px;line-height:19px;color:#24305a;letter-spacing:-0.803px;">724</span>
<span class="t" style="left:133.60px;top:497px;font-size:15.5px;line-height:19px;color:#24305a;letter-spacing:-0.693px;">209.85.244.158</span>
<span class="t" style="left:600.00px;top:497px;font-size:15.5px;line-height:19px;color:#24305a;letter-spacing:-0.693px;">209.85.244.158</span>
<span class="t" style="left:1131.08px;top:497px;font-size:15.5px;line-height:19px;color:#24305a;letter-spacing:-0.884px;">20.3</span>
<span class="t" style="left:1187.58px;top:497px;font-size:15.5px;line-height:19px;color:#24305a;letter-spacing:-0.884px;">19.0</span>
<span class="t" style="left:1243.18px;top:497px;font-size:15.5px;line-height:19px;color:#24305a;letter-spacing:-0.884px;">19.3</span>
<span class="t" style="left:1308.07px;top:497px;font-size:15.5px;line-height:19px;color:#24305a;letter-spacing:-1.066px;">0.1</span>
<span class="t" style="left:8.11px;top:520px;font-size:15.2px;line-height:19px;color:#14382f;letter-spacing:-0.726px;">15</span>
<span class="t" style="left:95.33px;top:522px;font-size:15.5px;line-height:19px;color:#24305a;letter-spacing:-0.803px;">724</span>
<span class="t" style="left:133.60px;top:522px;font-size:15.5px;line-height:19px;color:#24305a;letter-spacing:-0.693px;">216.239.40.230</span>
<span class="t" style="left:600.00px;top:522px;font-size:15.5px;line-height:19px;color:#24305a;letter-spacing:-0.693px;">216.239.40.230</span>
<span class="t" style="left:1131.08px;top:522px;font-size:15.5px;line-height:19px;color:#24305a;letter-spacing:-0.884px;">20.3</span>
<span class="t" style="left:1187.58px;top:522px;font-size:15.5px;line-height:19px;color:#24305a;letter-spacing:-0.884px;">17.5</span>
<span class="t" style="left:1243.18px;top:522px;font-size:15.5px;line-height:19px;color:#24305a;letter-spacing:-0.884px;">19.3</span>
<span class="t" style="left:1308.07px;top:522px;font-size:15.5px;line-height:19px;color:#24305a;letter-spacing:-1.066px;">0.1</span>
<span class="t" style="left:8.11px;top:545px;font-size:15.2px;line-height:19px;color:#14382f;letter-spacing:-0.726px;">16</span>
<span class="t" style="left:95.33px;top:547px;font-size:15.5px;line-height:19px;color:#24305a;letter-spacing:-0.803px;">724</span>
<span class="t" style="left:133.60px;top:547px;font-size:15.5px;line-height:19px;color:#24305a;letter-spacing:-0.682px;">108.170.241.193</span>
<span class="t" style="left:600.00px;top:547px;font-size:15.5px;line-height:19px;color:#24305a;letter-spacing:-0.682px;">108.170.241.193</span>
<span class="t" style="left:1131.08px;top:547px;font-size:15.5px;line-height:19px;color:#24305a;letter-spacing:-0.884px;">20.5</span>
<span class="t" style="left:1187.58px;top:547px;font-size:15.5px;line-height:19px;color:#24305a;letter-spacing:-0.884px;">19.1</span>
<span class="t" style="left:1243.18px;top:547px;font-size:15.5px;line-height:19px;color:#24305a;letter-spacing:-0.884px;">20.0</span>
<span class="t" style="left:1308.07px;top:547px;font-size:15.5px;line-height:19px;color:#24305a;letter-spacing:-1.066px;">0.1</span>
<span class="t" style="left:8.11px;top:570px;font-size:15.2px;line-height:19px;color:#14382f;letter-spacing:-0.726px;">17</span>
<span class="t" style="left:95.33px;top:572px;font-size:15.5px;line-height:19px;color:#24305a;letter-spacing:-0.803px;">724</span>
<span class="t" style="left:133.60px;top:572px;font-size:15.5px;line-height:19px;color:#24305a;letter-spacing:-0.682px;">108.170.236.135</span>
<span class="t" style="left:600.00px;top:572px;font-size:15.5px;line-height:19px;color:#24305a;letter-spacing:-0.682px;">108.170.236.135</span>
<span class="t" style="left:1131.08px;top:572px;font-size:15.5px;line-height:19px;color:#24305a;letter-spacing:-0.884px;">20.3</span>
<span class="t" style="left:1187.58px;top:572px;font-size:15.5px;line-height:19px;color:#24305a;letter-spacing:-0.884px;">18.9</span>
<span class="t" style="left:1243.18px;top:572px;font-size:15.5px;line-height:19px;color:#24305a;letter-spacing:-0.884px;">19.2</span>
<span class="t" style="left:1308.07px;top:572px;font-size:15.5px;line-height:19px;color:#24305a;letter-spacing:-1.066px;">0.1</span>
<span class="t" style="left:8.11px;top:595px;font-size:15.2px;line-height:19px;color:#14382f;letter-spacing:-0.726px;">18</span>
<span class="t" style="left:95.33px;top:597px;font-size:15.5px;line-height:19px;color:#24305a;letter-spacing:-0.803px;">727</span>
<span class="t" style="left:133.60px;top:597px;font-size:15.5px;line-height:19px;color:#24305a;letter-spacing:-0.706px;">172.217.17.36</span>
<span class="t" style="left:1131.08px;top:597px;font-size:15.5px;line-height:19px;color:#24305a;letter-spacing:-0.884px;">20.2</span>
<span class="t" style="left:1187.58px;top:597px;font-size:15.5px;line-height:19px;color:#24305a;letter-spacing:-0.884px;">17.0</span>
<span class="t" style="left:1243.18px;top:597px;font-size:15.5px;line-height:19px;color:#24305a;letter-spacing:-0.884px;">32.8</span>
<span class="t" style="left:1308.07px;top:597px;font-size:15.5px;line-height:19px;color:#24305a;letter-spacing:-1.066px;">0.3</span>
<span class="t" style="left:600.00px;top:197px;font-size:15.5px;line-height:19px;color:#24305a;letter-spacing:-0.009px;">router-</span>
<span class="t" style="left:600.00px;top:222px;font-size:15.5px;line-height:19px;color:#24305a;letter-spacing:-0.009px;">router-</span>
<span class="t" style="left:600.00px;top:272px;font-size:15.5px;line-height:19px;color:#24305a;letter-spacing:-0.009px;">router-</span>
<span class="t" style="left:743.60px;top:272px;font-size:15.5px;line-height:19px;color:#24305a;">.</span>
<span class="t" style="left:600.00px;top:347px;font-size:15.5px;line-height:19px;color:#24305a;">router-nfx-2.</span>
<span class="t" style="left:648.40px;top:372px;font-size:15.5px;line-height:19px;color:#24305a;letter-spacing:-0.511px;">-vl3805.nfx.cz</span>
<span class="t" style="left:600.00px;top:597px;font-size:15.5px;line-height:19px;color:#24305a;letter-spacing:-0.229px;">www.google.com</span>
<span class="t" style="left:95.33px;top:620px;font-size:15.5px;line-height:19px;color:#24305a;letter-spacing:-0.803px;">727</span>
<span class="t" style="left:988.60px;top:620px;font-size:15.2px;line-height:19px;color:#13205e;font-weight:bold;letter-spacing:-0.317px;">Round Trip (ms)</span>
<span class="t" style="left:1131.08px;top:620px;font-size:15.5px;line-height:19px;color:#24305a;letter-spacing:-0.884px;">20.2</span>
<span class="t" style="left:1187.58px;top:620px;font-size:15.5px;line-height:19px;color:#24305a;letter-spacing:-0.884px;">17.0</span>
<span class="t" style="left:1243.18px;top:620px;font-size:15.5px;line-height:19px;color:#24305a;letter-spacing:-0.884px;">32.8</span>
<span class="t" style="left:1308.07px;top:620px;font-size:15.5px;line-height:19px;color:#24305a;letter-spacing:-1.066px;">0.3</span>
<span class="t" style="left:1641.00px;top:620px;font-size:15.5px;line-height:19px;color:#24305a;letter-spacing:-0.747px;word-spacing:1.6px;">Focus: 2:31:01p - 2:37:43p</span>
<span class="t" style="left:1339.60px;top:149px;font-size:12.8px;line-height:17px;color:#1a1a1a;letter-spacing:-0.445px;">0 ms</span>
<span class="t" style="left:1785.00px;top:149px;font-size:12.8px;line-height:17px;color:#1a1a1a;letter-spacing:-0.365px;">53 ms</span>
<span class="t" style="left:33.60px;top:746px;font-size:12.8px;line-height:17px;color:#2a2a2a;letter-spacing:0.368px;">www.google.com (172.217.17.36) hop 18</span>
<span class="t" style="left:860.20px;top:746px;font-size:12.8px;line-height:17px;color:#2a2a2a;letter-spacing:0.417px;">Default Settings</span>
<span class="t" style="left:1591.40px;top:746px;font-size:12.8px;line-height:17px;color:#2a2a2a;letter-spacing:0.101px;word-spacing:1.2px;">10 minutes (2:27:43p - 2:37:43p)</span>
<span class="t" style="left:15.80px;top:758px;font-size:12.8px;line-height:17px;color:#333;letter-spacing:0.366px;">60</span>
<span class="t" style="left:23.27px;top:959px;font-size:12.8px;line-height:17px;color:#333;">0</span>
<span class="t" style="left:1785.20px;top:761px;font-size:12.8px;line-height:17px;color:#c0302c;letter-spacing:0.366px;">30</span>
<span class="t" style="left:35.20px;top:833px;font-size:12.8px;line-height:17px;color:#bccdb6;letter-spacing:0.385px;">40 ms</span>
<span class="t" style="left:35.20px;top:904px;font-size:12.8px;line-height:17px;color:#bccdb6;letter-spacing:0.385px;">20 ms</span>
<span class="t" style="left:75.60px;top:976px;font-size:12.8px;line-height:17px;color:#2c4a3a;letter-spacing:0.242px;">2:28p</span>
<span class="t" style="left:250.60px;top:976px;font-size:12.8px;line-height:17px;color:#2c4a3a;letter-spacing:0.242px;">2:29p</span>
<span class="t" style="left:425.60px;top:976px;font-size:12.8px;line-height:17px;color:#2c4a3a;letter-spacing:0.242px;">2:30p</span>
<span class="t" style="left:600.60px;top:976px;font-size:12.8px;line-height:17px;color:#2c4a3a;letter-spacing:0.242px;">2:31p</span>
<span class="t" style="left:775.60px;top:976px;font-size:12.8px;line-height:17px;color:#2c4a3a;letter-spacing:0.242px;">2:32p</span>
<span class="t" style="left:950.60px;top:976px;font-size:12.8px;line-height:17px;color:#2c4a3a;letter-spacing:0.242px;">2:33p</span>
<span class="t" style="left:1125.60px;top:976px;font-size:12.8px;line-height:17px;color:#2c4a3a;letter-spacing:0.242px;">2:34p</span>
<span class="t" style="left:1300.60px;top:976px;font-size:12.8px;line-height:17px;color:#2c4a3a;letter-spacing:0.242px;">2:35p</span>
<span class="t" style="left:1475.60px;top:976px;font-size:12.8px;line-height:17px;color:#2c4a3a;letter-spacing:0.242px;">2:36p</span>
<span class="t" style="left:1650.60px;top:976px;font-size:12.8px;line-height:17px;color:#2c4a3a;letter-spacing:0.242px;">2:37p</span>
<span class="t" style="left:0.00px;top:-13px;font-size:12.8px;line-height:17px;color:#444;left:0;top:0;transform-origin:0 0;transform:translate(14.5px,906.5px) rotate(-90deg);">Latency (ms)</span>
<span class="t" style="left:0.00px;top:-13px;font-size:12.8px;line-height:17px;color:#cf5a58;letter-spacing:-0.088px;left:0;top:0;transform-origin:0 0;transform:translate(1802px,837px) rotate(90deg);">Packet Loss %</span>
</body></html>
